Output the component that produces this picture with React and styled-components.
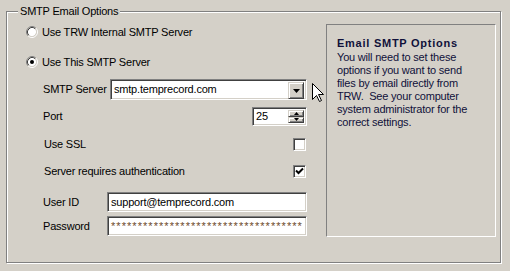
import React from "react";
import styled, { createGlobalStyle } from "styled-components";

const GlobalStyle = createGlobalStyle`
  body {
    margin: 0;
    background: #d4d0c8;
    font-family: "Liberation Sans", Arial, sans-serif;
    font-size: 11px;
    letter-spacing: -0.2px;
    color: #000;
  }
`;

const Root = styled.div`
  position: relative;
  width: 510px;
  height: 271px;
  background: #d4d0c8;
  padding: 11px 0 0 6px;
  box-sizing: border-box;
`;

const Frame = styled.div`
  position: relative;
  box-sizing: border-box;
  width: 495px;
  height: 252px;
  border: 1px solid #808080;
  box-shadow: inset 1px 1px 0 #fff, 1px 1px 0 #fff;
  display: flex;
  padding-top: 12px;
`;

const Legend = styled.span`
  position: absolute;
  top: -7px;
  left: 11px;
  padding: 0 2px;
  line-height: 13px;
  background: #d4d0c8;
`;

const Form = styled.div`
  width: 300px;
  display: flex;
  flex-direction: column;
`;

const Row = styled.div`
  display: flex;
  align-items: center;
  height: ${(p) => p.h || 16}px;
  margin-top: ${(p) => p.mt || 0}px;
  padding-left: ${(p) => p.pl || 0}px;
  line-height: 13px;
`;

const Label = styled.span`
  width: ${(p) => (p.w ? `${p.w}px` : "auto")};
  flex: ${(p) => (p.w ? "none" : 1)};
`;

const Sunken = styled.div`
  box-sizing: border-box;
  border: 1px solid;
  border-color: #808080 #fff #fff #808080;
  box-shadow: inset 1px 1px 0 #404040, inset -1px -1px 0 #d4d0c8;
  background: #fff;
`;

const Field = styled(Sunken)`
  width: ${(p) => p.w}px;
  height: ${(p) => p.h}px;
  margin-left: ${(p) => (p.right ? "auto" : 0)};
  display: flex;
  align-items: stretch;
  padding: 2px;
`;

const FieldText = styled.span`
  flex: 1;
  padding-left: 1px;
  display: flex;
  align-items: center;
  white-space: nowrap;
  overflow: hidden;
  color: ${(p) => p.color || "#000"};
  letter-spacing: ${(p) => (p.stars ? "1.05px" : "-0.2px")};
`;

const Button = styled.div`
  box-sizing: border-box;
  width: 16px;
  height: ${(p) => p.h || 17}px;
  background: #d4d0c8;
  border: 1px solid;
  border-color: #d4d0c8 #404040 #404040 #d4d0c8;
  box-shadow: inset 1px 1px 0 #fff, inset -1px -1px 0 #808080;
  display: flex;
  align-items: center;
  justify-content: center;
`;

const Spin = styled.div`
  display: flex;
  flex-direction: column;
`;

const Check = styled(Sunken)`
  width: 13px;
  height: 13px;
  margin-left: auto;
  margin-right: 1px;
  display: flex;
  align-items: center;
  justify-content: center;
`;

const RadioText = styled.span`
  margin-left: 4px;
`;

const Panel = styled.div`
  box-sizing: border-box;
  width: 170px;
  height: 213px;
  margin-left: 19px;
  border: 1px solid;
  border-color: #808080 #fff #fff #808080;
  padding: 11px 0 0 10px;
  color: #10103a;
  line-height: 13px;
`;

const PanelTitle = styled.div`
  font-weight: bold;
  letter-spacing: 0.75px;
  line-height: 14px;
  margin-bottom: 1px;
`;

const PanelBody = styled.div`
  white-space: pre-line;
`;

const Cursor = styled.svg`
  position: absolute;
  left: 312px;
  top: 83px;
`;

const Radio = ({ checked }) => (
  <svg width="12" height="12" viewBox="0 0 12 12">
    <circle cx="6" cy="6" r="4.2" fill="#fff" />
    <path d="M2.11 9.89 A5.5 5.5 0 0 1 9.89 2.11" stroke="#808080" fill="none" />
    <path d="M9.89 2.11 A5.5 5.5 0 0 1 2.11 9.89" stroke="#fff" fill="none" />
    <path d="M2.82 9.18 A4.5 4.5 0 0 1 9.18 2.82" stroke="#404040" fill="none" />
    <path d="M9.18 2.82 A4.5 4.5 0 0 1 2.82 9.18" stroke="#d4d0c8" fill="none" />
    {checked && <circle cx="6" cy="6" r="2" fill="#000" />}
  </svg>
);

const Tick = () => (
  <svg width="9" height="9" viewBox="0 0 9 9">
    <path d="M1 3.5 L3.5 6 L8 1.5" stroke="#000" strokeWidth="2" fill="none" />
  </svg>
);

const Arrow = ({ up, w = 7, h = 4 }) => (
  <svg width={w} height={h} viewBox={`0 0 ${w} ${h}`}>
    <polygon
      points={up ? `${w / 2},0 ${w},${h} 0,${h}` : `0,0 ${w},0 ${w / 2},${h}`}
      fill="#000"
    />
  </svg>
);

const App = () => (
  <Root>
    <GlobalStyle />
    <Frame>
      <Legend>SMTP Email Options</Legend>
      <Form>
        <Row pl={19}>
          <Radio />
          <RadioText>Use TRW Internal SMTP Server</RadioText>
        </Row>
        <Row pl={19} mt={14}>
          <Radio checked />
          <RadioText>Use This SMTP Server</RadioText>
        </Row>
        <Row pl={36} mt={9} h={21}>
          <Label w={67}>SMTP Server</Label>
          <Field w={197} h={21}>
            <FieldText>smtp.temprecord.com</FieldText>
            <Button>
              <Arrow />
            </Button>
          </Field>
        </Row>
        <Row pl={36} mt={7} h={19}>
          <Label>Port</Label>
          <Field w={55} h={19} right>
            <FieldText>25</FieldText>
            <Spin>
              <Button h={8}>
                <Arrow up w={5} h={3} />
              </Button>
              <Button h={7}>
                <Arrow w={5} h={3} />
              </Button>
            </Spin>
          </Field>
        </Row>
        <Row pl={37} mt={12} h={13}>
          <Label>Use SSL</Label>
          <Check />
        </Row>
        <Row pl={37} mt={14} h={13}>
          <Label>Server requires authentication</Label>
          <Check>
            <Tick />
          </Check>
        </Row>
        <Row pl={36} mt={14} h={20}>
          <Label w={64}>User ID</Label>
          <Field w={200} h={20}>
            <FieldText>support@temprecord.com</FieldText>
          </Field>
        </Row>
        <Row pl={36} mt={4} h={20}>
          <Label w={64}>Password</Label>
          <Field w={200} h={20}>
            <FieldText stars color="#6e4a2c">
              ************************************
            </FieldText>
          </Field>
        </Row>
      </Form>
      <Panel>
        <PanelTitle>Email SMTP Options</PanelTitle>
        <PanelBody>
          {"You will need to set these\noptions if you want to send\nfiles by email directly from\nTRW.\u00a0 See your computer\nsystem administrator for the\ncorrect settings."}
        </PanelBody>
      </Panel>
    </Frame>
    <Cursor width="13" height="20" viewBox="0 0 13 20">
      <polygon
        points="0.5,0.5 0.5,16.5 4.5,12.5 7.5,18.5 9.5,17.5 6.5,11.5 11.5,11.5"
        fill="#fff"
        stroke="#000"
        strokeWidth="1"
      />
    </Cursor>
  </Root>
);

export default App;
